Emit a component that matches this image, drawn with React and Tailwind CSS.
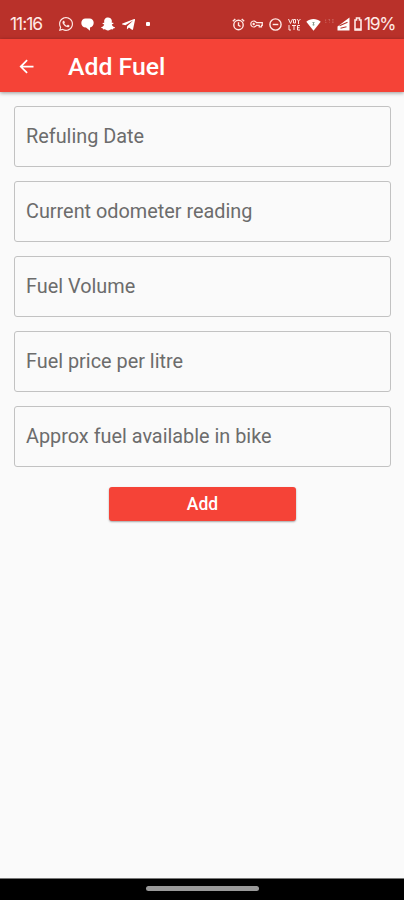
import { useState } from 'react';
import { FaWhatsapp, FaSnapchatGhost, FaTelegramPlane } from 'react-icons/fa';
import { MdArrowBack } from 'react-icons/md';

const FIELDS = [
  { id: 'date', label: 'Refuling Date' },
  { id: 'odometer', label: 'Current odometer reading' },
  { id: 'volume', label: 'Fuel Volume' },
  { id: 'price', label: 'Fuel price per litre' },
  { id: 'available', label: 'Approx fuel available in bike' },
];

/**
 * Android status bar: clock and app notifications on the left,
 * system icons and battery level on the right.
 */
function StatusBar() {
  return (
    <div className="h-[39px] pt-[10px] pl-[10px] pr-[9px] flex items-start justify-between bg-[#b9312a] text-[#ffe9e6]">
      <div className="flex items-center h-7">
        <span className="w-[33px] font-['Inter',sans-serif] text-[17.500px] leading-7 tracking-[-1.050px] whitespace-nowrap">
          11:16
        </span>
        <FaWhatsapp className="ml-[15px] size-[16px]" />
        {/* Chat bubble */}
        <svg className="ml-[7px] w-[13px] h-[13px] text-white" viewBox="0 0 13 13" fill="currentColor">
          <path d="M4.500.5h4C11 .5 12.700 2.300 12.700 4.800S11 9.200 9 9.400V12.700L5 9.500C2 9.500.3 7.500.3 5 .3 2.300 2 .5 4.500.5z" />
        </svg>
        <FaSnapchatGhost className="ml-[7px] size-[14px] text-white" />
        <FaTelegramPlane className="ml-[6px] size-[15px] text-white" />
        <span className="ml-[10px] size-[4px] rounded-[1px] bg-white" />
      </div>

      <div className="flex items-center h-7">
        {/* Alarm */}
        <svg className="w-[13px] h-[13px]" viewBox="0 0 13 13" fill="none" stroke="currentColor" strokeWidth="1.400">
          <circle cx="6.500" cy="7" r="4.700" />
          <path d="M6.500 4.300V7.300L8.500 8.500M.8 3.200L3.300 1M12.200 3.200L9.700 1" />
        </svg>
        {/* VPN key */}
        <svg className="ml-[5px] w-[13px] h-[8px]" viewBox="0 0 13 8" fill="none" stroke="currentColor" strokeWidth="1.200">
          <path d="M6.500 2.700H12.300V5.300H11.500V6.800H9.200V5.300H6.500A3 3 0 1 1 6.500 2.700z" />
          <circle cx="3.700" cy="4" r=".6" />
        </svg>
        {/* Do not disturb */}
        <svg className="ml-[6px] w-[13px] h-[13px]" viewBox="0 0 13 13" fill="none" stroke="currentColor" strokeWidth="1.400">
          <circle cx="6.500" cy="6.500" r="5.600" />
          <path d="M3.700 6.500h5.600" />
        </svg>
        {/* VoLTE */}
        <svg className="ml-[6px] w-[13px] h-[13px]" viewBox="0 0 13 13" fill="none" stroke="currentColor" strokeWidth="1">
          <path d="M.5 1l2 4.500 2-4.500M5.500 1.500h2v3.500h-2zM9 1l1.500 2L12.500 1M10.500 3v3M1 7v5h2M4 7.500h4M6 7.500V12M12 7.500H9.500V12H12M9.500 9.700h2" />
        </svg>
        {/* Wifi */}
        <svg className="ml-[5px] w-[15px] h-[13px]" viewBox="0 0 15 13">
          <path d="M.3 3.700C4.500.2 10.500.2 14.700 3.700L7.500 12.800z" fill="#fff" />
          <path d="M6.500 4.500h2M6.500 6.800h2M7.500 4.500v3" stroke="#8b9d8f" fill="none" />
        </svg>
        {/* Network type */}
        <svg className="ml-[3px] mb-[7px] w-[12px] h-[4px] opacity-30" viewBox="0 0 12 5" fill="none" stroke="currentColor">
          <path d="M.5.5v4h2M4 .5h3M5.500.5v4M8.500.5h3M8.500 2.500h3M8.500 4.500h3" strokeDasharray="2 1" />
        </svg>
        {/* Signal */}
        <svg className="ml-px w-[13px] h-[14px]" viewBox="0 0 13 14">
          <path d="M12.500.5v13H.5V9.500z" fill="#fff" />
          <path d="M2.500 8.800L10.500 5.300M3.500 11.300l6-1.500" stroke="#b9312a" strokeWidth="1.100" fill="none" />
        </svg>
        {/* Battery */}
        <svg className="ml-[4px] w-[8px] h-[14px]" viewBox="0 0 8 14" fill="none" stroke="currentColor">
          <path d="M1 3h1.500V1h3v2H7v10H1z" strokeWidth="1.600" />
          <path d="M1 12.300h6" strokeWidth="2" />
        </svg>
        <span className="ml-[2px] w-[31px] font-['Inter',sans-serif] text-[17.500px] leading-7 tracking-[-1.400px] whitespace-nowrap">
          19%
        </span>
      </div>
    </div>
  );
}

/**
 * Outlined text field. The label sits inside the box until the field has a value.
 */
function OutlinedField({ id, label, value, onChange }) {
  return (
    <label
      htmlFor={id}
      className="h-[61px] pt-px px-[11px] flex items-center rounded-[3px] border border-[#c2c2c2] text-[#6c6c6c] text-[19.850px]"
    >
      {!value && (
        <span className="shrink-0 leading-6 whitespace-nowrap">
          {label}
        </span>
      )}
      <input
        id={id}
        type="text"
        value={value}
        onChange={(e) => onChange(id, e.target.value)}
        className="min-w-0 flex-1 bg-transparent outline-none"
      />
    </label>
  );
}

function App() {
  const [values, setValues] = useState({});

  function handleChange(id, value) {
    setValues((prev) => ({ ...prev, [id]: value }));
  }

  return (
    <div className="w-full h-screen flex flex-col overflow-hidden bg-[#fafafa] font-['Roboto',sans-serif]">
      <StatusBar />

      {/* App bar */}
      <header className="h-[53px] shrink-0 pt-px flex items-center bg-[#f54337] text-white shadow-[0_1px_4px_rgba(0,0,0,0.4)]">
        <button type="button" aria-label="Back" className="ml-4 size-[21px]">
          <MdArrowBack className="size-[21px]" />
        </button>
        <h1 className="ml-[31px] pt-px text-[24.800px] leading-8 font-medium whitespace-nowrap">Add Fuel</h1>
      </header>

      {/* Form */}
      <form
        onSubmit={(e) => e.preventDefault()}
        className="flex-1 pt-[14px] pl-[14px] pr-[13px] flex flex-col"
      >
        <div className="flex flex-col gap-[14px]">
          {FIELDS.map((field) => (
            <OutlinedField
              key={field.id}
              {...field}
              value={values[field.id] || ''}
              onChange={handleChange}
            />
          ))}
        </div>
        <button
          type="submit"
          className="mt-5 w-[187px] h-[34px] self-center rounded-[3px] bg-[#f54337] text-white text-[17.500px] font-medium shadow-[0_1px_2px_rgba(0,0,0,0.35)]"
        >
          Add
        </button>
      </form>

      {/* Gesture bar */}
      <div className="h-[22px] shrink-0 pt-[7px] flex justify-center bg-black border-t border-[#777777]">
        <div className="w-[113px] h-[5px] rounded-full bg-[#999999]" />
      </div>
    </div>
  );
}

export default App;
